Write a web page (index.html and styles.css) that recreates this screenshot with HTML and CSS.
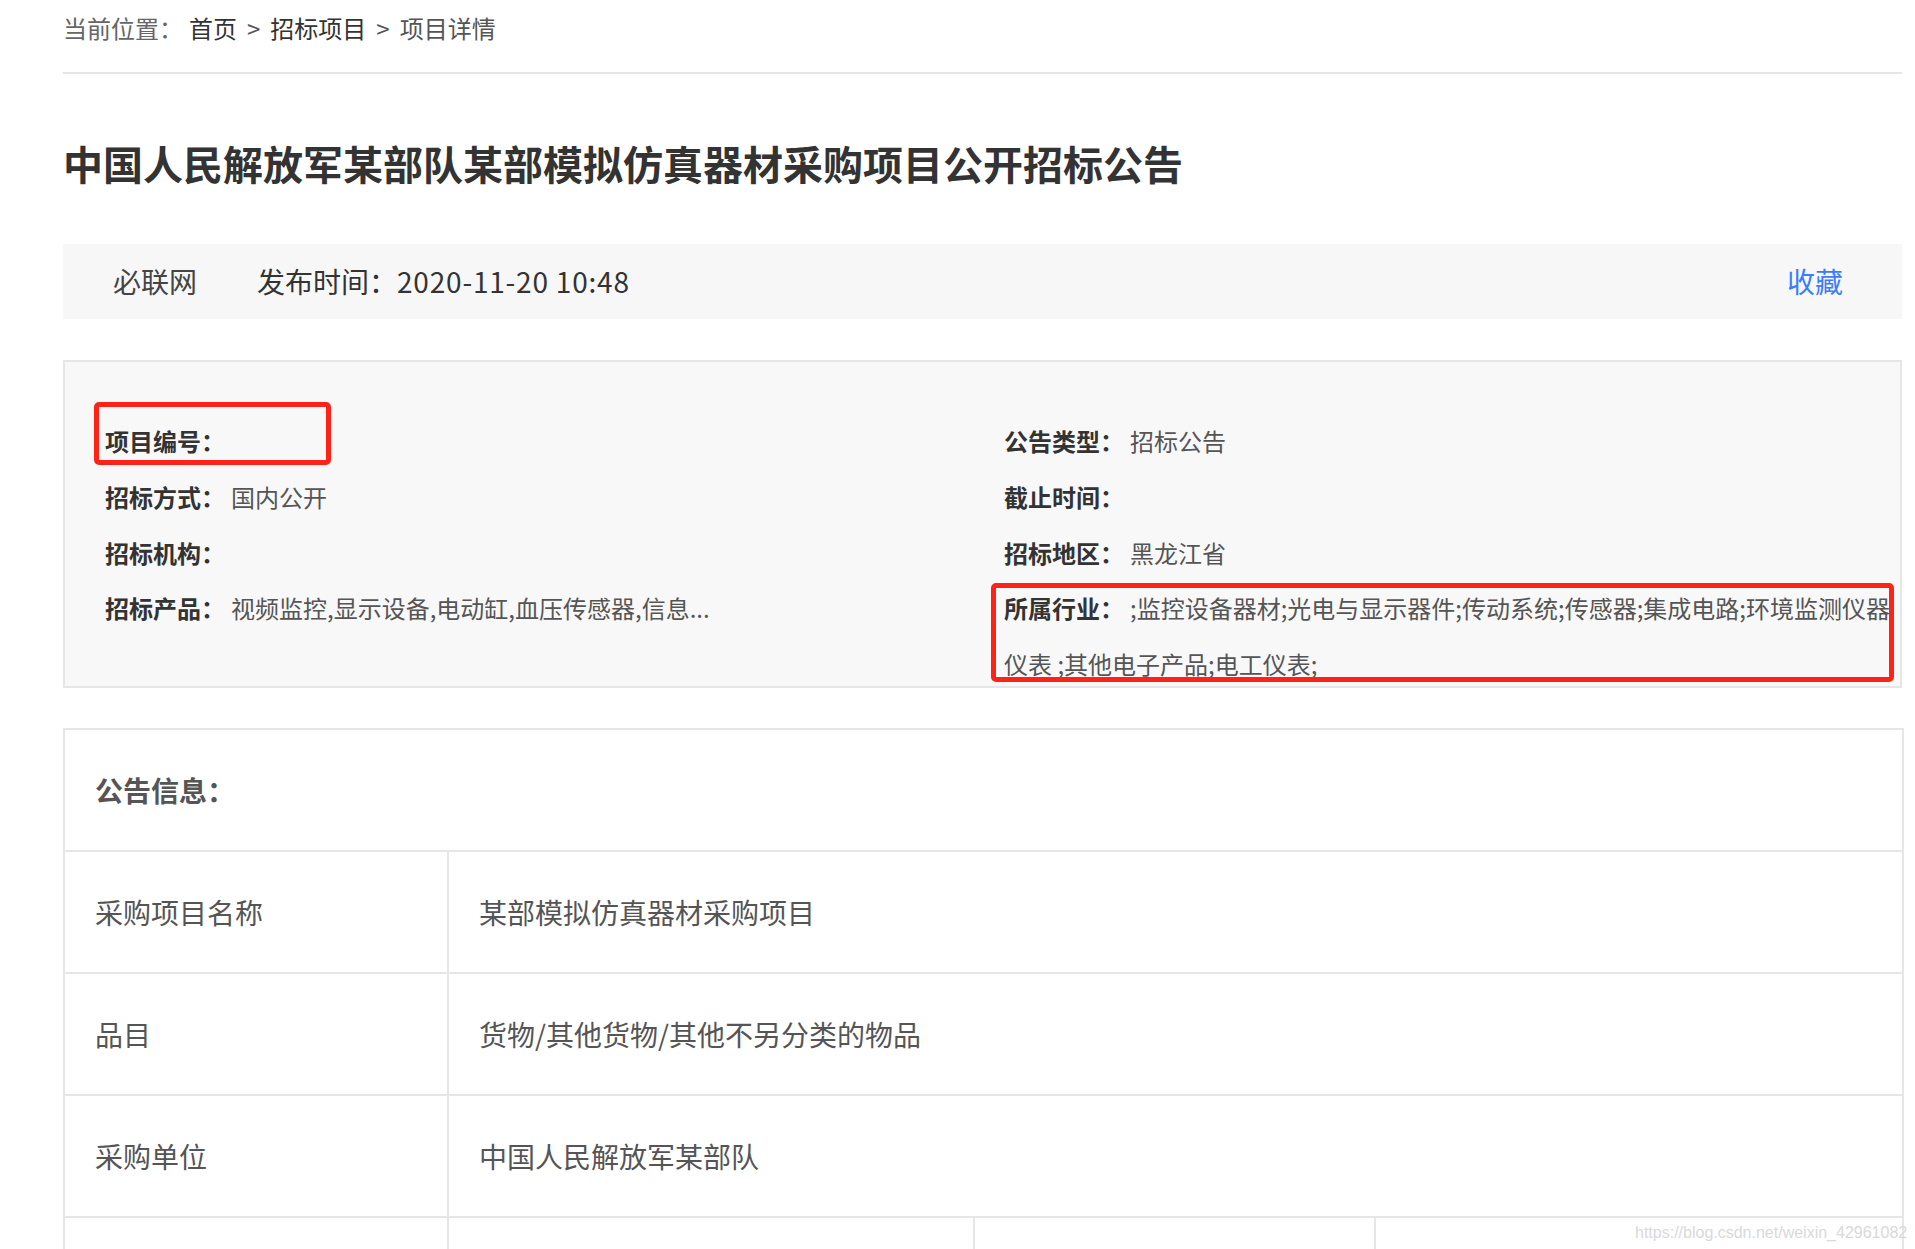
FILE: index.html
```html
<!DOCTYPE html>
<html lang="zh-CN">
<head>
<meta charset="utf-8">
<title>项目详情</title>
<link rel="stylesheet" href="styles.css">
</head>
<body>
<div class="page">
  <div class="crumbs">
    <span class="crumb-label">当前位置：</span>
    <a class="crumb-link home">首页</a>
    <span class="sep">&gt;</span>
    <a class="crumb-link">招标项目</a>
    <span class="sep">&gt;</span>
    <span class="crumb-current">项目详情</span>
  </div>

  <h1 class="title">中国人民解放军某部队某部模拟仿真器材采购项目公开招标公告</h1>

  <div class="meta-bar">
    <div class="meta-left">
      <span class="source">必联网</span>
      <span class="pubtime">发布时间：<span class="date">2020-11-20 10:48</span></span>
    </div>
    <a class="fav">收藏</a>
  </div>

  <div class="info-box">
    <div class="info-col left">
      <div class="info-item"><span class="lbl">项目编号：</span></div>
      <div class="info-item"><span class="lbl">招标方式：</span><span class="val">国内公开</span></div>
      <div class="info-item"><span class="lbl">招标机构：</span></div>
      <div class="info-item"><span class="lbl">招标产品：</span><span class="val">视频监控,显示设备,电动缸,血压传感器,信息...</span></div>
    </div>
    <div class="info-col right">
      <div class="info-item"><span class="lbl">公告类型：</span><span class="val">招标公告</span></div>
      <div class="info-item"><span class="lbl">截止时间：</span></div>
      <div class="info-item"><span class="lbl">招标地区：</span><span class="val">黑龙江省</span></div>
      <div class="info-item"><span class="lbl">所属行业：</span><span class="val">;监控设备器材;光电与显示器件;传动系统;传感器;集成电路;环境监测仪器</span><span class="val-cont">仪表 ;其他电子产品;电工仪表;</span></div>
    </div>
    <div class="mark mark-code"></div>
    <div class="mark mark-industry"></div>
  </div>

  <table class="notice">
    <colgroup>
      <col class="c1"><col class="c2"><col class="c3"><col class="c4">
    </colgroup>
    <tr><th colspan="4">公告信息：</th></tr>
    <tr><td class="key">采购项目名称</td><td colspan="3">某部模拟仿真器材采购项目</td></tr>
    <tr><td class="key">品目</td><td colspan="3">货物/其他货物/其他不另分类的物品</td></tr>
    <tr><td class="key">采购单位</td><td colspan="3">中国人民解放军某部队</td></tr>
    <tr><td class="key"></td><td></td><td></td><td></td></tr>
  </table>
</div>
<div class="watermark">https://blog.csdn.net/weixin_42961082</div>
</body>
</html>
```

FILE: styles.css
```css
html, body {
  margin: 0;
  padding: 0;
  background: #ffffff;
}

body {
  font-family: "Noto Sans CJK SC", "Microsoft YaHei", "Noto Sans", sans-serif;
  color: #333333;
  position: relative;
  overflow: hidden;
  height: 1249px;
}

.page {
  width: 1839px;
  margin-left: 63px;
}

/* breadcrumb */
.crumbs {
  height: 72px;
  line-height: 56px;
  font-size: 24px;
  border-bottom: 2px solid #e6e6e6;
  display: flex;
  align-items: flex-start;
  white-space: nowrap;
}
.crumb-label { color: #666666; }
.crumb-link { color: #333333; text-decoration: none; }
.home { margin-left: 6px; }
.sep { color: #555555; margin: 0 10px; }
.crumb-current { color: #555555; }

/* title */
.title {
  margin: 59px 0 51px 0;
  font-size: 40px;
  line-height: 60px;
  font-weight: 700;
  color: #333333;
  white-space: nowrap;
}

/* meta bar */
.meta-bar {
  height: 75px;
  background: #f7f7f7;
  display: flex;
  align-items: center;
  justify-content: space-between;
  padding: 0 59px 0 50px;
  font-size: 28px;
  line-height: 75px;
}
.meta-left { display: flex; }
.source { color: #444444; }
.pubtime { color: #333333; margin-left: 60px; }
.date { letter-spacing: 0.8px; }
.fav { color: #3b7cff; text-decoration: none; }

/* info box */
.info-box {
  position: relative;
  margin-top: 41px;
  height: 328px;
  box-sizing: border-box;
  border: 2px solid #e6e6e6;
  background: #f8f8f8;
  padding: 51px 4px 0 40px;
  display: flex;
  overflow: hidden;
}
.info-col { display: flex; flex-direction: column; }
.info-col.left { width: 899px; flex: none; }
.info-col.right { flex: 1; min-width: 0; }
.info-item {
  font-size: 24px;
  line-height: 55.75px;
}
.lbl { font-weight: 700; color: #333333; }
.val { color: #555555; margin-left: 6px; }
.val-cont { color: #555555; }

/* red annotation marks drawn over the screenshot */
.mark {
  position: absolute;
  border: 5px solid #fe2316;
  border-radius: 5px;
  box-sizing: border-box;
  pointer-events: none;
}
.mark-code {
  left: 29px;
  top: 40px;
  width: 237px;
  height: 63px;
}
.mark-industry {
  left: 926px;
  top: 221px;
  width: 903px;
  height: 99px;
}

/* notice table */
.notice {
  margin-top: 40px;
  width: 1839px;
  border-collapse: collapse;
  table-layout: fixed;
  font-size: 28px;
  color: #555555;
}
.notice .c1 { width: 384px; }
.notice .c2 { width: 526px; }
.notice .c3 { width: 401px; }
.notice .c4 { width: 528px; }
.notice th,
.notice td {
  border: 2px solid #e6e6e6;
  height: 120px;
  padding: 0 0 0 30px;
  text-align: left;
  vertical-align: middle;
}
.notice th {
  font-weight: 700;
  color: #555555;
}

.watermark {
  position: absolute;
  left: 1635px;
  top: 1223px;
  font-family: "Liberation Sans", Arial, sans-serif;
  font-size: 16px;
  line-height: 20px;
  color: #d9d9d9;
  white-space: nowrap;
}
```
